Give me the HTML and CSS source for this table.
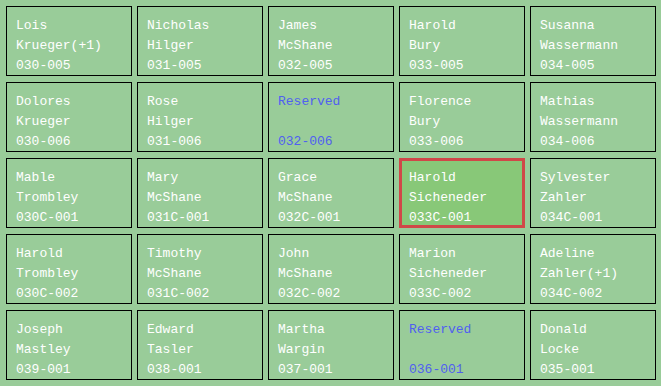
FILE: index.html
```html
<!DOCTYPE html>
<html>
<head>
<meta charset="utf-8">
<link rel="stylesheet" href="styles.css">
</head>
<body>
<div class="grid">
  <div class="cell"><div>Lois</div><div>Krueger(+1)</div><div>030-005</div></div>
  <div class="cell"><div>Nicholas</div><div>Hilger</div><div>031-005</div></div>
  <div class="cell"><div>James</div><div>McShane</div><div>032-005</div></div>
  <div class="cell"><div>Harold</div><div>Bury</div><div>033-005</div></div>
  <div class="cell"><div>Susanna</div><div>Wassermann</div><div>034-005</div></div>

  <div class="cell"><div>Dolores</div><div>Krueger</div><div>030-006</div></div>
  <div class="cell"><div>Rose</div><div>Hilger</div><div>031-006</div></div>
  <div class="cell reserved"><div>Reserved</div><div>&nbsp;</div><div>032-006</div></div>
  <div class="cell"><div>Florence</div><div>Bury</div><div>033-006</div></div>
  <div class="cell"><div>Mathias</div><div>Wassermann</div><div>034-006</div></div>

  <div class="cell"><div>Mable</div><div>Trombley</div><div>030C-001</div></div>
  <div class="cell"><div>Mary</div><div>McShane</div><div>031C-001</div></div>
  <div class="cell"><div>Grace</div><div>McShane</div><div>032C-001</div></div>
  <div class="cell selected"><div>Harold</div><div>Sicheneder</div><div>033C-001</div></div>
  <div class="cell"><div>Sylvester</div><div>Zahler</div><div>034C-001</div></div>

  <div class="cell"><div>Harold</div><div>Trombley</div><div>030C-002</div></div>
  <div class="cell"><div>Timothy</div><div>McShane</div><div>031C-002</div></div>
  <div class="cell"><div>John</div><div>McShane</div><div>032C-002</div></div>
  <div class="cell"><div>Marion</div><div>Sicheneder</div><div>033C-002</div></div>
  <div class="cell"><div>Adeline</div><div>Zahler(+1)</div><div>034C-002</div></div>

  <div class="cell"><div>Joseph</div><div>Mastley</div><div>039-001</div></div>
  <div class="cell"><div>Edward</div><div>Tasler</div><div>038-001</div></div>
  <div class="cell"><div>Martha</div><div>Wargin</div><div>037-001</div></div>
  <div class="cell reserved"><div>Reserved</div><div>&nbsp;</div><div>036-001</div></div>
  <div class="cell"><div>Donald</div><div>Locke</div><div>035-001</div></div>
</div>
</body>
</html>
```
FILE: styles.css
```css
html, body {
  margin: 0;
  padding: 0;
  background: #99cc99;
}
body {
  padding: 6px;
  font-family: "Liberation Mono", "DejaVu Sans Mono", monospace;
  font-size: 13px;
  line-height: 20px;
  color: #ffffff;
}
.grid {
  display: grid;
  grid-template-columns: repeat(5, 126px);
  grid-auto-rows: 70px;
  column-gap: 5px;
  row-gap: 6px;
}
.cell {
  box-sizing: border-box;
  border: 1px solid #000000;
  padding: 9px 0 0 9px;
  white-space: nowrap;
}
.reserved {
  color: #5060f0;
}
.selected {
  border: 3px solid #d04848;
  padding: 7px 0 0 7px;
  background: #88c878;
}
```
